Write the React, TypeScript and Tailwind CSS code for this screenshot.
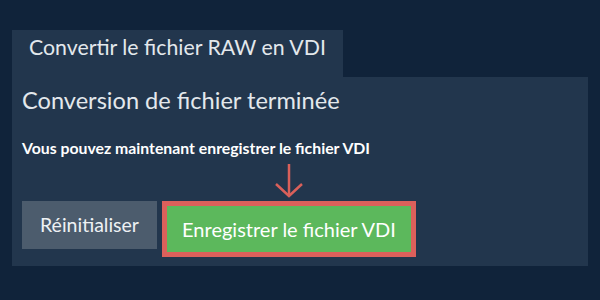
import React from "react";

export default function App() {
  return (
    <div
      className="w-[600px] h-[300px] bg-[#10233a] pt-[30px] px-[12px]"
      style={{ fontFamily: "Lato, 'Open Sans', sans-serif" }}
    >
      {/* Tab */}
      <div className="inline-flex h-[47px] items-start bg-[#22364d] pl-[17px] pr-[17px] pt-[5px] text-[21.3px] leading-[25px] text-[#e3e8ec]">
        Convertir le fichier RAW en VDI
      </div>

      {/* Panel */}
      <div className="w-[576px] h-[189px] bg-[#22364d] px-[10px] pt-[9px]">
        <h2 className="text-[23.6px] leading-[29px] text-[#e3e8ec]">Conversion de fichier terminée</h2>
        <p className="mt-[24px] text-[15.8px] leading-[18px] font-bold text-white">
          Vous pouvez maintenant enregistrer le fichier VDI
        </p>

        <div className="mt-[44px] flex items-start gap-[5px]">
          <button className="h-[48px] w-[135px] bg-[#4c5c6d] text-[19.5px] text-[#eef1f4]">
            Réinitialiser
          </button>
          <div className="relative">
            <svg
              className="absolute left-1/2 -translate-x-1/2 -top-[38px]"
              width="30"
              height="36"
              viewBox="0 0 30 36"
              fill="none"
              stroke="#d9605a"
              strokeWidth="2.5"
            >
              <path d="M15 1 V33" />
              <path d="M2 21 L15 33 L28 21" />
            </svg>
            <button className="h-[56px] w-[254px] border-[5px] border-[#dc605b] bg-[#5cb85c] text-[20px] text-white">
              Enregistrer le fichier VDI
            </button>
          </div>
        </div>
      </div>
    </div>
  );
}
